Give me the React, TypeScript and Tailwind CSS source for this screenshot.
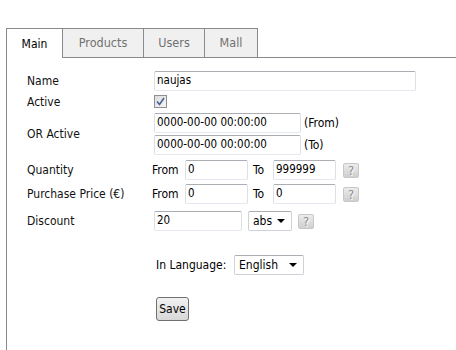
import React from "react";

const font = "font-['DejaVu_Sans_Condensed','Liberation_Sans',sans-serif]";

function Input({ value, w }: { value: string; w: string }) {
  return (
    <div
      className={`${w} h-[20px] box-border border border-t-[#abadb3] border-x-[#dbdfe6] border-b-[#e3e9ef] rounded-[2px] bg-white px-[2px] flex items-center text-[11.5px] text-black leading-none`}
    >
      {value}
    </div>
  );
}

function Help() {
  return (
    <div className="w-[16px] h-[15px] box-border border border-[#c8c8c8] rounded-[2px] bg-gradient-to-b from-[#ececec] to-[#cfcfcf] flex items-center justify-center text-[13px] text-[#8e8e8e] leading-none [text-shadow:1px_1px_0_#fff]">
      ?
    </div>
  );
}

function Select({ value, w }: { value: string; w: string }) {
  return (
    <div
      className={`${w} h-[20px] box-border border border-[#cdd1d8] border-t-[#abadb3] rounded-[2px] bg-white pl-[4px] pr-[6px] flex items-center justify-between text-[12px] text-black leading-none`}
    >
      <span>{value}</span>
      <svg width="8" height="4" viewBox="0 0 8 4">
        <polygon points="0,0 8,0 4,4" fill="#000" />
      </svg>
    </div>
  );
}

export default function App() {
  const label = "w-[125px] shrink-0 text-[12px] text-[#111]";
  return (
    <div className={`w-[456px] h-[350px] bg-white overflow-hidden ${font} pt-[28px] pl-[6px]`}>
      {/* tabs */}
      <div className="flex h-[30px]">
        <div className="w-[57px] h-[30px] box-border border-l border-t border-r border-[#8a8a8a] bg-white flex items-center justify-center text-[12px] text-black">
          Main
        </div>
        <div className="w-[81px] h-[30px] box-border border-t border-r border-b border-[#8a8a8a] bg-[#f0f0f0] flex items-center justify-center text-[12.5px] text-[#707070]">
          Products
        </div>
        <div className="w-[61px] h-[30px] box-border border-t border-r border-b border-[#8a8a8a] bg-[#f0f0f0] flex items-center justify-center text-[12.5px] text-[#707070]">
          Users
        </div>
        <div className="w-[53px] h-[30px] box-border border-t border-r border-b border-[#8a8a8a] bg-[#f0f0f0] flex items-center justify-center text-[12.5px] text-[#707070]">
          Mall
        </div>
        <div className="flex-1 h-[30px] box-border border-b border-[#8a8a8a]" />
      </div>

      {/* panel */}
      <div className="h-[300px] border-l border-[#8a8a8a] pl-[20px] pt-[13px] flex flex-col">
        {/* Name */}
        <div className="flex items-center h-[20px]">
          <div className={label}>Name</div>
          <div className="ml-[2px]">
            <Input value="naujas" w="w-[262px]" />
          </div>
        </div>
        {/* Active */}
        <div className="flex items-center h-[19px] mt-[1px]">
          <div className={label}>Active</div>
          <div className="ml-[2px] w-[13px] h-[13px] box-border border border-[#8e8f8f] bg-gradient-to-br from-[#dcdcdc] to-[#f6f6f6] flex items-center justify-center">
            <svg width="9" height="9" viewBox="0 0 9 9">
              <path d="M1 4.5 L3.5 7.5 L8 1" stroke="#4a5f97" strokeWidth="1.6" fill="none" />
            </svg>
          </div>
        </div>
        {/* OR Active */}
        <div className="flex items-center mt-[2px]">
          <div className={label}>OR Active</div>
          <div className="ml-[2px] flex flex-col gap-[2px]">
            <div className="flex items-center">
              <Input value="0000-00-00 00:00:00" w="w-[147px]" />
              <span className="ml-[3px] text-[12px] text-black">(From)</span>
            </div>
            <div className="flex items-center">
              <Input value="0000-00-00 00:00:00" w="w-[147px]" />
              <span className="ml-[3px] text-[12px] text-black">(To)</span>
            </div>
          </div>
        </div>
        {/* Quantity */}
        <div className="flex items-center h-[20px] mt-[5px]">
          <div className={label}>Quantity</div>
          <div className="w-[33px] text-[12px] text-black">From</div>
          <Input value="0" w="w-[63px]" />
          <div className="ml-[5px] w-[20px] text-[12px] text-black">To</div>
          <Input value="999999" w="w-[63px]" />
          <div className="ml-[7px]">
            <Help />
          </div>
        </div>
        {/* Purchase price */}
        <div className="flex items-center h-[20px] mt-[4px]">
          <div className={label}>Purchase Price (€)</div>
          <div className="w-[33px] text-[12px] text-black">From</div>
          <Input value="0" w="w-[63px]" />
          <div className="ml-[5px] w-[20px] text-[12px] text-black">To</div>
          <Input value="0" w="w-[63px]" />
          <div className="ml-[7px]">
            <Help />
          </div>
        </div>
        {/* Discount */}
        <div className="flex items-center h-[20px] mt-[7px]">
          <div className={label}>Discount</div>
          <div className="ml-[2px]">
            <Input value="20" w="w-[88px]" />
          </div>
          <div className="ml-[6px]">
            <Select value="abs" w="w-[44px]" />
          </div>
          <div className="ml-[6px]">
            <Help />
          </div>
        </div>
        {/* Language */}
        <div className="flex items-center h-[20px] mt-[24px]">
          <div className="w-[125px] shrink-0" />
          <div className="ml-[4px] w-[78px] text-[12px] text-black">In Language:</div>
          <Select value="English" w="w-[70px]" />
        </div>
        {/* Save */}
        <div className="flex items-center mt-[22px]">
          <div className="w-[125px] shrink-0" />
          <button className="ml-[4px] w-[33px] h-[24px] box-border border border-[#707070] rounded-[3px] bg-gradient-to-b from-[#f2f2f2] to-[#d8d8d8] text-[12px] text-black flex items-center justify-center">
            Save
          </button>
        </div>
      </div>
    </div>
  );
}
